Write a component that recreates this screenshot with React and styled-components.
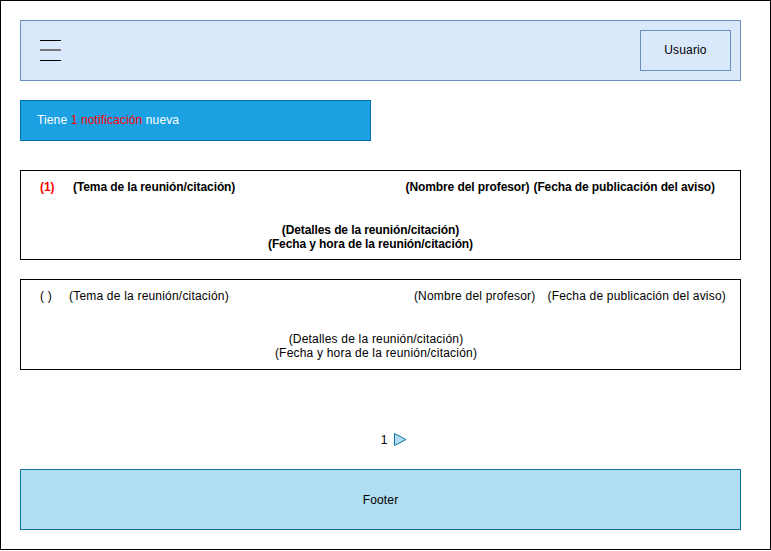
import React from "react";
import styled, { createGlobalStyle } from "styled-components";

const GlobalStyle = createGlobalStyle`
  body {
    margin: 0;
    background: #ffffff;
    font-family: "Liberation Sans", Arial, sans-serif;
  }
`;

const Frame = styled.div`
  box-sizing: border-box;
  width: 771px;
  height: 550px;
  border: 1px solid #000000;
  padding: 19px 29px 19px 19px;
  display: flex;
  flex-direction: column;
`;

const Header = styled.header`
  box-sizing: border-box;
  height: 61px;
  width: 721px;
  background: #dae8fc;
  border: 1px solid #6c8ebf;
  display: flex;
  align-items: center;
  justify-content: space-between;
  padding: 0 9px 0 19px;
`;

const Burger = styled.svg`
  display: block;
  width: 21px;
  height: 21px;
`;

const UserButton = styled.button`
  box-sizing: border-box;
  width: 91px;
  height: 41px;
  background: #dae8fc;
  border: 1px solid #6c8ebf;
  font-family: "Liberation Sans", Arial, sans-serif;
  font-size: 12px;
  letter-spacing: 0.15px;
  color: #000000;
  padding: 0;
  cursor: pointer;
`;

const Notice = styled.div`
  box-sizing: border-box;
  margin-top: 19px;
  width: 351px;
  height: 41px;
  background: #1ba1e2;
  border: 1px solid #006eaf;
  display: flex;
  align-items: center;
  padding-left: 16px;
  font-size: 12px;
  letter-spacing: 0.12px;
  color: #ffffff;
`;

const Red = styled.span`
  color: #ff0000;
  font-weight: ${(p) => (p.$bold ? 700 : 400)};
`;

const Card = styled.section`
  box-sizing: border-box;
  margin-top: ${(p) => p.$top}px;
  width: 721px;
  height: 91px;
  border: 1px solid #000000;
  padding: 9px ${(p) => p.$right}px 0 19px;
  font-size: 12px;
  line-height: 14px;
  font-weight: ${(p) => (p.$bold ? 700 : 400)};
  letter-spacing: ${(p) => (p.$bold ? "-0.1px" : "0.2px")};
  color: #000000;
`;

const TopRow = styled.div`
  display: flex;
  align-items: center;
`;

const Index = styled.span`
  width: ${(p) => p.$w}px;
  flex: none;
`;

const Topic = styled.span`
  flex: 1;
`;

const Meta = styled.div`
  display: flex;
  gap: ${(p) => p.$gap}px;
`;

const Details = styled.div`
  margin-top: 29px;
  text-align: center;
  padding-right: ${(p) => p.$shift}px;
`;

const Pager = styled.nav`
  margin-top: 60px;
  height: 19px;
  display: flex;
  align-items: center;
  justify-content: center;
  gap: 7px;
  padding-left: 27px;
  font-size: 12px;
`;

const Footer = styled.footer`
  box-sizing: border-box;
  margin-top: 20px;
  width: 721px;
  height: 61px;
  background: #b1ddf0;
  border: 1px solid #10739e;
  display: flex;
  align-items: center;
  justify-content: center;
  font-size: 12px;
  letter-spacing: 0.15px;
  color: #000000;
`;

const meetings = [
  { idx: "(1)", idxW: 33, bold: true, top: 29, right: 25, gap: 4, shift: 14, unread: true },
  { idx: "( )", idxW: 29, bold: false, top: 19, right: 14, gap: 12, shift: 14, unread: false },
];

const App = () => {
  return (
    <>
      <GlobalStyle />
      <Frame>
        <Header>
          <Burger viewBox="0 0 21 21">
            <line x1="0" y1="0.5" x2="21" y2="0.5" stroke="#000" strokeWidth="1" />
            <line x1="0" y1="10" x2="21" y2="10" stroke="#777" strokeWidth="2" />
            <line x1="0" y1="20.5" x2="21" y2="20.5" stroke="#000" strokeWidth="1" />
          </Burger>
          <UserButton>Usuario</UserButton>
        </Header>

        <Notice>
          Tiene&nbsp;<Red>1 notificación</Red>&nbsp;nueva
        </Notice>

        {meetings.map((m) => (
          <Card key={m.idx} $top={m.top} $right={m.right} $bold={m.bold}>
            <TopRow>
              <Index $w={m.idxW}>{m.unread ? <Red $bold>{m.idx}</Red> : m.idx}</Index>
              <Topic>(Tema de la reunión/citación)</Topic>
              <Meta $gap={m.gap}>
                <span>(Nombre del profesor)</span>
                <span>(Fecha de publicación del aviso)</span>
              </Meta>
            </TopRow>
            <Details $shift={m.shift}>
              (Detalles de la reunión/citación)
              <br />
              (Fecha y hora de la reunión/citación)
            </Details>
          </Card>
        ))}

        <Pager>
          <span>1</span>
          <svg width="13" height="13" viewBox="0 0 13 13">
            <polygon points="0.5,0.5 12,6.5 0.5,12.5" fill="#b1ddf0" stroke="#10739e" strokeWidth="1" />
          </svg>
        </Pager>

        <Footer>Footer</Footer>
      </Frame>
    </>
  );
};

export default App;
